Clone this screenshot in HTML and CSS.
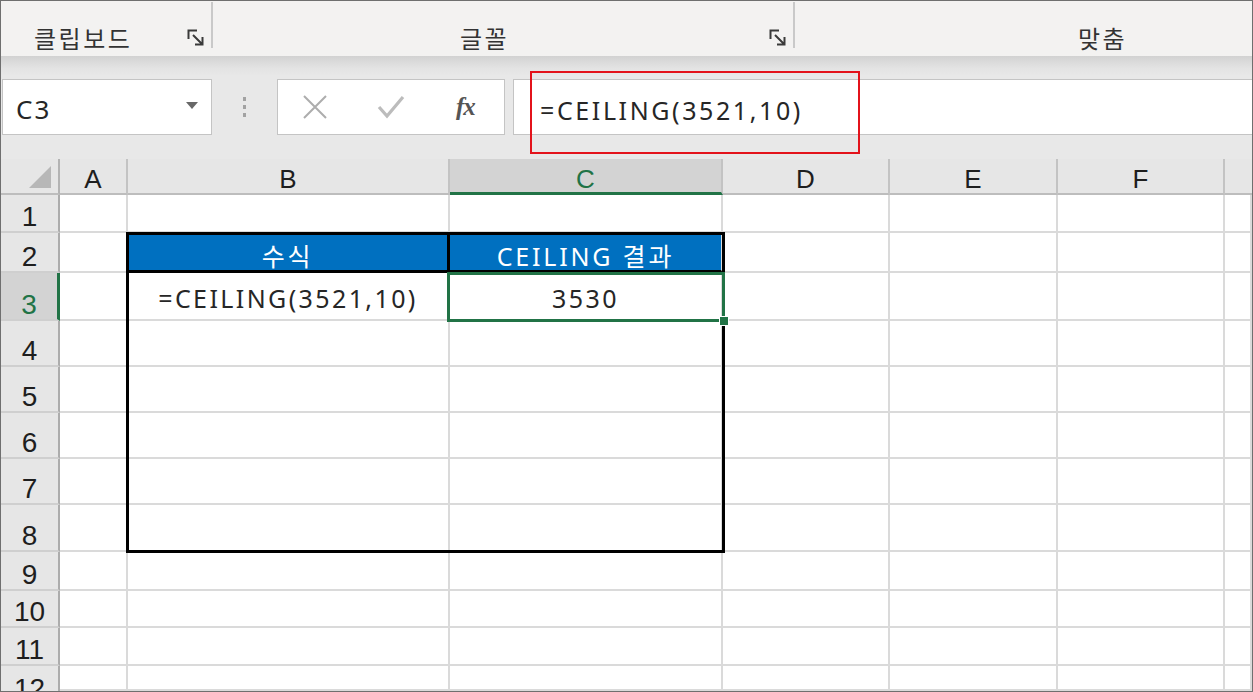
FILE: index.html
```html
<!DOCTYPE html>
<html lang="ko">
<head>
<meta charset="utf-8">
<title>CEILING</title>
<link rel="stylesheet" href="styles.css">
</head>
<body>
<div class="window">
  <div class="ribbon">
    <div class="group g1">
      <span class="glabel">클립보드</span>
      <svg class="launch" width="18" height="18" viewBox="0 0 18 18"><path d="M1.5 10 V1.5 H10" fill="none" stroke="#3a3a3a" stroke-width="2"/><path d="M6 6 L15 15 M8 15.5 H15.5 V8" fill="none" stroke="#3a3a3a" stroke-width="2"/></svg>
    </div>
    <div class="sep"></div>
    <div class="group g2">
      <span class="glabel">글꼴</span>
      <svg class="launch" width="18" height="18" viewBox="0 0 18 18"><path d="M1.5 10 V1.5 H10" fill="none" stroke="#3a3a3a" stroke-width="2"/><path d="M6 6 L15 15 M8 15.5 H15.5 V8" fill="none" stroke="#3a3a3a" stroke-width="2"/></svg>
    </div>
    <div class="sep"></div>
    <div class="group g3">
      <span class="glabel">맞춤</span>
    </div>
  </div>

  <div class="fbar">
    <div class="namebox"><span class="nbtext">C3</span><span class="caret"></span></div>
    <div class="dots"><i></i><i></i><i></i></div>
    <div class="btns">
      <svg class="ico-x" width="26" height="24" viewBox="0 0 26 24"><path d="M2 1 L24 23 M24 1 L2 23" stroke="#adadad" stroke-width="2" fill="none"/></svg>
      <svg class="ico-ok" width="28" height="24" viewBox="0 0 28 24"><path d="M2 12 L10 21 L26 2" stroke="#bcbcbc" stroke-width="3.2" fill="none"/></svg>
      <span class="fx">fx</span>
    </div>
    <div class="fbox">=CEILING(3521,10)</div>
  </div>

  <div class="sheet">
    <div class="corner"><svg width="24" height="24" viewBox="0 0 24 24"><path d="M23 1 V23 H1 Z" fill="#b7b7b7"/></svg></div>
    <div class="ch">A</div><div class="ch">B</div><div class="ch cur">C</div><div class="ch">D</div><div class="ch">E</div><div class="ch">F</div><div class="ch end"></div>

    <div class="rh">1</div><div class="c"></div><div class="c"></div><div class="c"></div><div class="c"></div><div class="c"></div><div class="c"></div><div class="c"></div>

    <div class="rh">2</div><div class="c"></div><div class="c v hd hdl">수식</div><div class="c v hd">CEILING 결과</div><div class="c"></div><div class="c"></div><div class="c"></div><div class="c"></div>

    <div class="rh cur">3</div><div class="c"></div><div class="c v">=CEILING(3521,10)</div><div class="c v">3530</div><div class="c"></div><div class="c"></div><div class="c"></div><div class="c"></div>

    <div class="rh">4</div><div class="c"></div><div class="c"></div><div class="c"></div><div class="c"></div><div class="c"></div><div class="c"></div><div class="c"></div>
    <div class="rh">5</div><div class="c"></div><div class="c"></div><div class="c"></div><div class="c"></div><div class="c"></div><div class="c"></div><div class="c"></div>
    <div class="rh">6</div><div class="c"></div><div class="c"></div><div class="c"></div><div class="c"></div><div class="c"></div><div class="c"></div><div class="c"></div>
    <div class="rh">7</div><div class="c"></div><div class="c"></div><div class="c"></div><div class="c"></div><div class="c"></div><div class="c"></div><div class="c"></div>
    <div class="rh">8</div><div class="c"></div><div class="c"></div><div class="c"></div><div class="c"></div><div class="c"></div><div class="c"></div><div class="c"></div>
    <div class="rh">9</div><div class="c"></div><div class="c"></div><div class="c"></div><div class="c"></div><div class="c"></div><div class="c"></div><div class="c"></div>
    <div class="rh">10</div><div class="c"></div><div class="c"></div><div class="c"></div><div class="c"></div><div class="c"></div><div class="c"></div><div class="c"></div>
    <div class="rh">11</div><div class="c"></div><div class="c"></div><div class="c"></div><div class="c"></div><div class="c"></div><div class="c"></div><div class="c"></div>
    <div class="rh last">12</div><div class="c"></div><div class="c"></div><div class="c"></div><div class="c"></div><div class="c"></div><div class="c"></div><div class="c"></div>

    <div class="frame"></div>
    <div class="selection"><div class="handle"></div></div>
  </div>

  <div class="callout"></div>
</div>
</body>
</html>
```

FILE: styles.css
```css
html, body {
  margin: 0;
  padding: 0;
  background: #ffffff;
}

.window {
  width: 1253px;
  height: 692px;
  box-sizing: border-box;
  border: 1px solid #6f6f6f;
  position: relative;
  overflow: hidden;
  display: flex;
  flex-direction: column;
  background: #ffffff;
  font-family: "Noto Sans", "Noto Sans CJK KR", sans-serif;
}

/* ---------- ribbon ---------- */
.ribbon {
  height: 55px;
  flex: none;
  display: flex;
  background: #f3f2f1;
}

.group {
  display: flex;
  align-items: flex-end;
  box-sizing: border-box;
  padding-bottom: 3px;
}

.g1 { width: 210px; }
.g2 { width: 580px; }
.g3 { flex: 1; }

.glabel {
  font-family: "Noto Sans CJK KR", sans-serif;
  font-size: 24px;
  line-height: 30px;
  color: #333333;
  letter-spacing: 2.5px;
}

.g1 .glabel { margin-left: 33px; }
.g2 .glabel { margin-left: 247px; }
.g3 .glabel { margin-left: 283px; }

.launch {
  margin-left: auto;
  margin-bottom: 6px;
}
.g1 .launch { margin-right: 6px; }
.g2 .launch { margin-right: 6px; }

.sep {
  width: 2px;
  height: 46px;
  margin-top: 1px;
  background: #c9c9c9;
  flex: none;
}

/* ---------- formula bar ---------- */
.fbar {
  height: 103px;
  flex: none;
  box-sizing: border-box;
  padding-top: 23px;
  display: flex;
  align-items: flex-start;
  background: linear-gradient(#d2d2d2 0px, #e3e3e3 12px, #e8e8e8 20px, #e8e8e8 100%);
}

.namebox {
  margin-left: 1px;
  width: 210px;
  height: 56px;
  box-sizing: border-box;
  background: #ffffff;
  border: 1px solid #c4c4c4;
  display: flex;
  align-items: center;
  padding-left: 13px;
  padding-right: 13px;
}

.nbtext {
  font-size: 26px;
  letter-spacing: 2px;
  color: #262626;
  padding-top: 4px;
}

.caret {
  margin-left: auto;
  width: 0;
  height: 0;
  border-left: 6px solid transparent;
  border-right: 6px solid transparent;
  border-top: 7px solid #686868;
  margin-bottom: 3px;
}

.dots {
  width: 65px;
  height: 56px;
  flex: none;
  display: flex;
  flex-direction: column;
  align-items: center;
  justify-content: center;
  gap: 4px;
}

.dots i {
  display: block;
  width: 3px;
  height: 4px;
  background: #a2a2a2;
}

.btns {
  width: 228px;
  height: 56px;
  flex: none;
  box-sizing: border-box;
  background: #ffffff;
  border: 1px solid #c4c4c4;
  display: flex;
  align-items: center;
}

.ico-x { margin-left: 24px; }
.ico-ok { margin-left: 49px; }

.fx {
  margin-left: 51px;
  font-family: "Liberation Serif", serif;
  font-style: italic;
  font-weight: bold;
  font-size: 25px;
  color: #555555;
  letter-spacing: -1px;
}

.fbox {
  margin-left: 8px;
  flex: 1;
  height: 56px;
  box-sizing: border-box;
  background: #ffffff;
  border: 1px solid #c4c4c4;
  border-right: none;
  display: flex;
  align-items: center;
  padding-left: 26px;
  padding-top: 6px;
  font-size: 25px;
  letter-spacing: 2.6px;
  color: #262626;
}

/* ---------- sheet ---------- */
.sheet {
  flex: 1;
  position: relative;
  display: grid;
  grid-template-columns: 59px 68px 322px 273px 167px 168px 167px 1fr;
  grid-template-rows: 36px 38px 40px 48px 46px 46px 46px 46px 47px 39px 37px 38px 1fr;
  background: #ffffff;
  overflow: hidden;
}

.corner {
  background: #e6e6e6;
  border-right: 2px solid #b3b3b3;
  border-bottom: 2px solid #bdbdbd;
  display: flex;
  align-items: flex-end;
  justify-content: flex-end;
  padding: 0 6px 4px 0;
}

.ch {
  background: #e6e6e6;
  border-right: 2px solid #c3c3c3;
  border-bottom: 2px solid #bdbdbd;
  display: flex;
  align-items: center;
  justify-content: center;
  padding-top: 7px;
  font-family: "Liberation Sans", Arial, sans-serif;
  font-size: 26px;
  color: #1e1e1e;
}

.ch.cur {
  background: #d3d3d3;
  color: #217346;
  border-bottom: 3px solid #217346;
}

.ch.end { border-right: none; }

.rh {
  background: #e6e6e6;
  border-right: 2px solid #acacac;
  border-bottom: 2px solid #cfcfcf;
  display: flex;
  align-items: flex-end;
  justify-content: center;
  font-family: "Liberation Sans", Arial, sans-serif;
  font-size: 28px;
  line-height: 29px;
  color: #1e1e1e;
}

.rh.cur {
  background: #d3d3d3;
  color: #217346;
  border-right: 3px solid #217346;
}

.rh.last {
  align-items: flex-start;
  padding-top: 8px;
  border-bottom: none;
  overflow: hidden;
}

.c {
  border-right: 2px solid #dadada;
  border-bottom: 2px solid #dadada;
}

.v {
  display: flex;
  align-items: flex-end;
  justify-content: center;
  padding-bottom: 4px;
  font-size: 25px;
  line-height: 33px;
  letter-spacing: 2.4px;
  color: #262626;
  white-space: nowrap;
}

.hd {
  background: #0070c0;
  color: #ffffff;
  border-bottom: 3px solid #000000;
  letter-spacing: 2.8px;
  padding-bottom: 0;
  line-height: 28px;
}

.hdl {
  border-right: 3px solid #000000;
}

.frame {
  position: absolute;
  left: 125px;
  top: 73px;
  width: 599px;
  height: 321px;
  box-sizing: border-box;
  border: 3px solid #000000;
  pointer-events: none;
}

.selection {
  position: absolute;
  left: 446px;
  top: 113px;
  width: 278px;
  height: 50px;
  box-sizing: border-box;
  border: 3px solid #217346;
  pointer-events: none;
}

.handle {
  position: absolute;
  right: -7px;
  bottom: -7px;
  width: 8px;
  height: 8px;
  background: #217346;
  border: 1px solid #ffffff;
}

/* annotation box around the formula */
.callout {
  position: absolute;
  left: 529px;
  top: 70px;
  width: 330px;
  height: 83px;
  box-sizing: border-box;
  border: 2px solid #e3131b;
  pointer-events: none;
}
```
